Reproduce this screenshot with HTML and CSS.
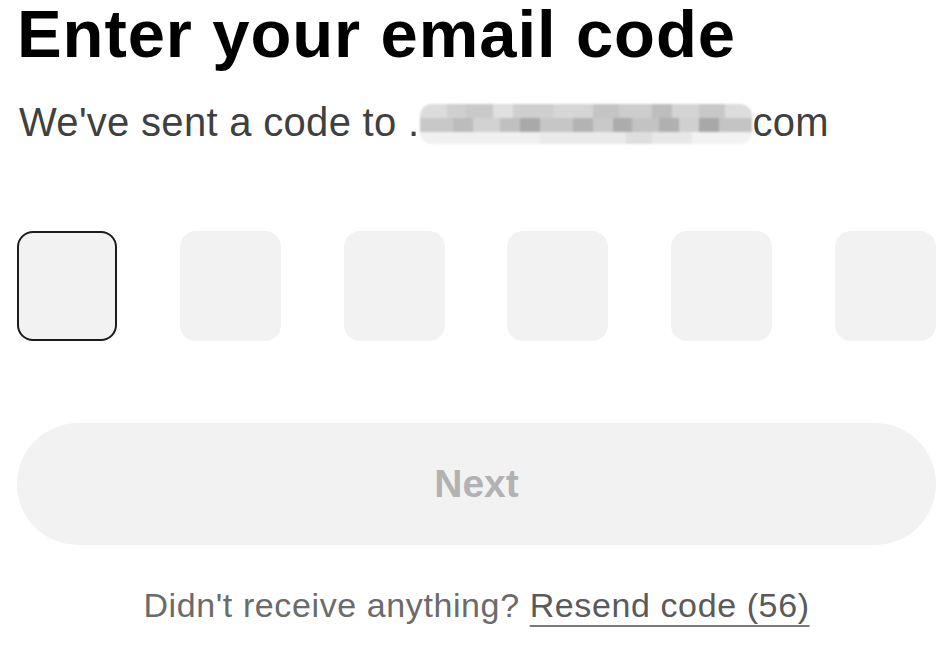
FILE: index.html
```html
<!DOCTYPE html>
<html lang="en">
<head>
<meta charset="utf-8">
<title>Enter your email code</title>
<link rel="stylesheet" href="styles.css">
</head>
<body>
<main class="page">
  <h1 class="title">Enter your email code</h1>
  <p class="subtitle">We've sent a code to .<span class="redacted" aria-hidden="true"></span>com</p>
  <div class="code-row">
    <div class="code-box active"></div>
    <div class="code-box"></div>
    <div class="code-box"></div>
    <div class="code-box"></div>
    <div class="code-box"></div>
    <div class="code-box"></div>
  </div>
  <button class="next-btn" type="button" disabled>Next</button>
  <p class="resend">Didn't receive anything? <a class="resend-link" href="#">Resend code (56)</a></p>
</main>
</body>
</html>
```

FILE: styles.css
```css
html, body {
  margin: 0;
  padding: 0;
  background: #ffffff;
}

body {
  font-family: "Liberation Sans", Arial, sans-serif;
  color: #000;
}

.page {
  width: 919px;
  padding: 0 12px 20px 17px;
  display: flex;
  flex-direction: column;
}

.title {
  margin: 0;
  padding-top: 0;
  font-size: 67px;
  line-height: 68px;
  height: 68px;
  font-weight: 700;
  letter-spacing: 0.9px;
  color: #000;
  white-space: nowrap;
}

.subtitle {
  margin: 34px 0 0 2px;
  font-size: 40px;
  line-height: 40px;
  letter-spacing: 0.3px;
  color: #404040;
  white-space: nowrap;
}

.redacted {
  display: inline-block;
  vertical-align: -8px;
  width: 332px;
  height: 40px;
  margin-left: 1px;
  border-radius: 12px;
  filter: blur(1.2px);
  background:
    linear-gradient(90deg, #dcdcdc 0 8%, #d0d0d0 8% 14%, #c9c9c9 14% 22%, #e0e0e0 22% 28%, #cfcfcf 28% 40%, #d6d6d6 40% 52%, #c4c4c4 52% 60%, #cdcdcd 60% 70%, #bdbdbd 70% 76%, #d4d4d4 76% 84%, #c8c8c8 84% 92%, #dddddd 92% 100%) 0 0 / 100% 14px no-repeat,
    linear-gradient(90deg, #c8c8c8 0 10%, #bcbcbc 10% 16%, #d2d2d2 16% 24%, #c0c0c0 24% 30%, #a9a9a9 30% 36%, #c6c6c6 36% 46%, #b3b3b3 46% 52%, #c9c9c9 52% 58%, #acacac 58% 64%, #c3c3c3 64% 72%, #b0b0b0 72% 78%, #d0d0d0 78% 84%, #a8a8a8 84% 90%, #c4c4c4 90% 100%) 0 14px / 100% 14px no-repeat,
    linear-gradient(90deg, #f0f0f0 0 36%, #eaeaea 36% 62%, #dedede 62% 70%, #e8e8e8 70% 82%, #f2f2f2 82% 100%) 0 28px / 100% 12px no-repeat;
}

.code-row {
  margin-top: 87px;
  display: flex;
  justify-content: space-between;
}

.code-box {
  box-sizing: border-box;
  width: 101px;
  height: 110px;
  border-radius: 16px;
  background: #f2f2f2;
}

.code-box.active {
  width: 100px;
  border: 2px solid #1c1c1c;
}

.next-btn {
  margin-top: 82px;
  height: 122px;
  width: 100%;
  border: none;
  border-radius: 61px;
  background: #f2f2f2;
  font-family: "Liberation Sans", Arial, sans-serif;
  font-size: 39px;
  font-weight: 700;
  color: #b2b2b2;
  padding: 0;
}

.resend {
  margin: 43px 0 0 0;
  text-align: center;
  font-size: 34px;
  line-height: 34px;
  letter-spacing: 0.6px;
  color: #6b6b6b;
}

.resend-link {
  color: #5a5a5a;
  text-decoration: underline;
  text-decoration-thickness: 2px;
  text-underline-offset: 8px;
  text-decoration-skip-ink: none;
  text-decoration-color: #7a7a7a;
}
```
